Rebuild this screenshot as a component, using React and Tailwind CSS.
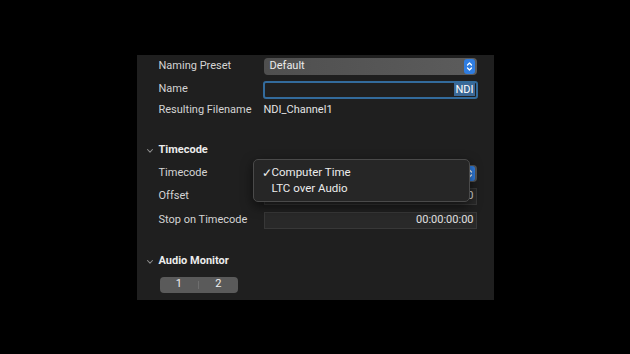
import React from "react";

function Stepper({ className = "" }) {
  return (
    <span className={`flex h-[15px] w-[11px] items-center justify-center rounded-[3px] bg-[#2f7de1] ${className}`}>
      <svg width="7" height="11" viewBox="0 0 7 11" fill="none" stroke="white" strokeWidth="1.3" strokeLinecap="round" strokeLinejoin="round">
        <path d="M1.5 4 L3.5 2 L5.5 4" />
        <path d="M1.5 7 L3.5 9 L5.5 7" />
      </svg>
    </span>
  );
}

function Chevron() {
  return (
    <svg width="8" height="6" viewBox="0 0 8 6" fill="none" stroke="#8a8a8a" strokeWidth="1.1" strokeLinecap="round" strokeLinejoin="round" className="mr-[5px]">
      <path d="M1.5 1.5 L4 4.2 L6.5 1.5" />
    </svg>
  );
}

function Row({ label, className = "", children }) {
  return (
    <div className={`flex h-[18px] items-center ${className}`}>
      <div className="w-[106px] pl-[22px] shrink-0 box-content text-[#d4d4d4]">{label}</div>
      <div className="-ml-[1px] flex flex-1 items-center">{children}</div>
    </div>
  );
}

function Header({ title, className = "" }) {
  return (
    <div className={`flex h-[18px] items-center pl-[9px] ${className}`}>
      <Chevron />
      <span className="font-bold text-[#ececec]">{title}</span>
    </div>
  );
}

export default function App() {
  return (
    <div className="flex h-[354px] w-[630px] items-center justify-center bg-black" style={{ fontFamily: "Roboto, 'Noto Sans', sans-serif" }}>
      <div className="relative h-[245px] w-[357px] bg-[#1f1f1f] pr-[16px] pt-[3px] text-[11px]">
        <Row label="Naming Preset">
          <div className="flex h-[17px] w-[213px] items-center justify-between rounded-[4px] bg-gradient-to-r from-[#4f4f4f] to-[#5c5c5c] pl-[6px] pr-[2px] text-[#ececec]">
            <span>Default</span>
            <Stepper />
          </div>
        </Row>
        <Row label="Name" className="mt-[5px]">
          <div className="-ml-[1px] flex h-[18px] w-[215px] items-center justify-end rounded-[3px] border-[2px] border-[#336b9c] bg-[#202020] pr-[1px]">
            <span className="bg-[#3b6896] px-[1px] leading-[13px] text-white">NDI</span>
          </div>
        </Row>
        <Row label="Resulting Filename" className="mt-[3px]">
          <span className="text-[#e4e4e4]">NDI_Channel1</span>
        </Row>

        <Header title="Timecode" className="mt-[22px]" />
        <Row label="Timecode" className="mt-[5px]">
          <div className="flex h-[17px] w-[213px] items-center justify-end rounded-[4px] bg-[#555] pr-[2px]">
            <Stepper />
          </div>
        </Row>
        <Row label="Offset" className="mt-[5px]">
          <div className="flex h-[17px] w-[213px] items-center justify-end border border-[#383838] bg-[#292929] pr-[2px] text-[#e0e0e0]">
            00:00:00:00
          </div>
        </Row>
        <Row label="Stop on Timecode" className="mt-[6px]">
          <div className="flex h-[17px] w-[213px] items-center justify-end border border-[#383838] bg-[#292929] pr-[2px] text-[#e0e0e0]">
            00:00:00:00
          </div>
        </Row>

        <Header title="Audio Monitor" className="mt-[23px]" />
        <div className="ml-[23px] mt-[6px] flex h-[16px] w-[78px] items-center rounded-[4px] bg-[#5a5a5a] text-[#f0f0f0]">
          <span className="flex-1 text-center">1</span>
          <span className="h-[8px] w-px bg-[#6e6e6e]" />
          <span className="flex-1 text-center">2</span>
        </div>

        <div className="absolute left-[116px] top-[104px] h-[43px] w-[217px] rounded-[5px] border border-[#4a4a4a] bg-[#262626] pt-[5px] text-[11.5px] text-[#ececec] shadow-[0_4px_12px_rgba(0,0,0,0.6)]">
          <div className="flex h-[16px] items-center">
            <span className="w-[18px] pl-[8px] text-[12px]">✓</span>
            <span>Computer Time</span>
          </div>
          <div className="flex h-[16px] items-center pl-[18px]">LTC over Audio</div>
        </div>
      </div>
    </div>
  );
}
